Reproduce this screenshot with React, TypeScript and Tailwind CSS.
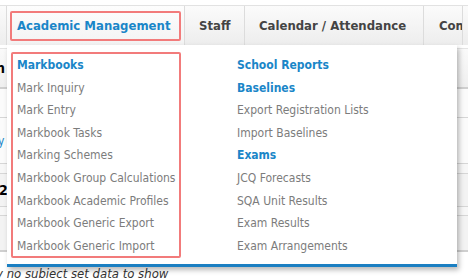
const LEFT = [
  { label: "Markbooks", head: true },
  { label: "Mark Inquiry" },
  { label: "Mark Entry" },
  { label: "Markbook Tasks" },
  { label: "Marking Schemes" },
  { label: "Markbook Group Calculations" },
  { label: "Markbook Academic Profiles" },
  { label: "Markbook Generic Export" },
  { label: "Markbook Generic Import" },
];

const RIGHT = [
  { label: "School Reports", head: true },
  { label: "Baselines", head: true },
  { label: "Export Registration Lists" },
  { label: "Import Baselines" },
  { label: "Exams", head: true },
  { label: "JCQ Forecasts" },
  { label: "SQA Unit Results" },
  { label: "Exam Results" },
  { label: "Exam Arrangements" },
];

type Item = { label: string; head?: boolean };

function MenuItem({ it }: { it: Item }) {
  return (
    <div
      className={
        it.head
          ? "font-bold text-[#1a86c8] leading-[22.6px] whitespace-nowrap"
          : "text-[#7c7c7c] leading-[22.6px] whitespace-nowrap"
      }
    >
      {it.label}
    </div>
  );
}

export default function App() {
  const font = "font-['DejaVu_Sans_Condensed','DejaVu_Sans',sans-serif]";
  return (
    <div className={`relative w-[468px] h-[278px] overflow-hidden bg-white ${font}`}>
      {/* top nav */}
      <div className="mt-[5px] border-t border-[#e2e2e2] h-[40px] flex bg-gradient-to-b from-[#fbfbfb] to-[#ededed] text-[13px] font-bold text-[#444]">
        <div className="w-[7px] border-r border-[#dcdcdc]" />
        <div className="w-[178px] border-r border-[#dcdcdc] flex items-center pl-[3px] bg-gradient-to-b from-[#fdfdfd] to-[#f3f3f3]">
          <div className="w-[171px] h-[30px] border-2 border-[#f27b7b] rounded-[2px] flex items-center pl-[5px] text-[#1a86c8]">
            Academic Management
          </div>
        </div>
        <div className="w-[60px] border-r border-[#dcdcdc] flex items-center pl-[14px]">Staff</div>
        <div className="w-[179px] border-r border-[#dcdcdc] flex items-center pl-[14px]">
          Calendar / Attendance
        </div>
        <div className="w-[39px] border-r border-[#dcdcdc] flex items-center pl-[15px] overflow-hidden whitespace-nowrap">
          Communication
        </div>
      </div>

      {/* page content behind the menu */}
      <div className="mt-[3px] text-[12px] text-[#333]">
        <div className="h-[39px] bg-gradient-to-b from-[#fafafa] to-[#efefef] border-t border-[#e4e4e4] flex items-center font-bold text-black text-[14px]">
          <span className="-ml-[4px]">n</span>
        </div>
        <div className="h-[30px] border-t-2 border-[#cfcfcf] bg-[#fbfbfb]" />
        <div className="h-[46px] border-t border-[#d6d6d6] bg-[#fbfbfb] flex items-center text-[#1a86c8] text-[12px]">
          <span className="-ml-[2px]">y</span>
        </div>
        <div className="h-[10px] border-t border-[#d6d6d6] bg-[#f7f7f7]" />
        <div className="h-[33px] border-t border-[#d6d6d6] bg-[#f3f3f3] flex items-center font-bold text-black text-[14px]">
          <span className="-ml-[1px]">2</span>
        </div>
        <div className="h-[9px] border-t border-[#d6d6d6] bg-[#f7f7f7]" />
        <div className="h-[35px] border-t border-[#d6d6d6] bg-[#f3f3f3]" />
        <div className="border-t-2 border-[#cfcfcf] pt-[15px] italic text-[#333] text-[13px] leading-none whitespace-nowrap -ml-[4px]">
          y no subject set data to show
        </div>
      </div>

      {/* dropdown menu */}
      <div className="absolute left-[7px] top-[45px] w-[450px] h-[222px] bg-white border-b-[3px] border-[#1b7fc2] shadow-[2px_3px_5px_rgba(0,0,0,0.28)] flex text-[12px]">
        <div className="ml-[4px] mt-[7px] w-[170px] h-[206px] border-2 border-[#f27b7b] rounded-[2px] pl-[4px]">
          {LEFT.map((it) => (
            <MenuItem key={it.label} it={it} />
          ))}
        </div>
        <div className="ml-[56px] mt-[9px]">
          {RIGHT.map((it) => (
            <MenuItem key={it.label} it={it} />
          ))}
        </div>
      </div>
    </div>
  );
}
